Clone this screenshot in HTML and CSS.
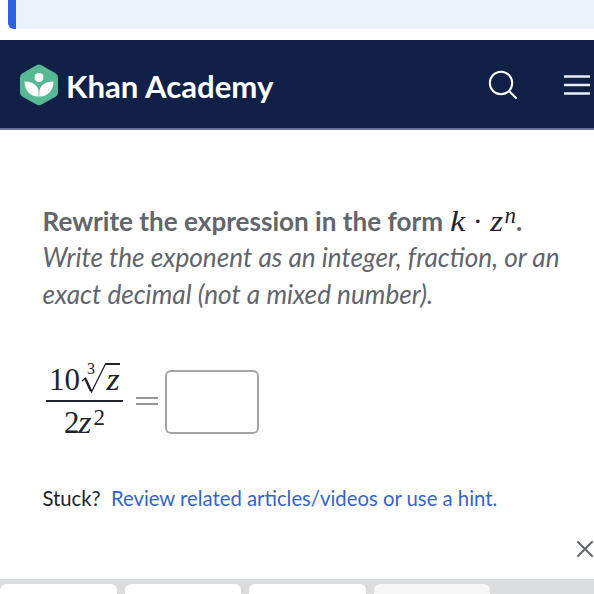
FILE: index.html
```
<!DOCTYPE html>
<html lang="en">
<head>
  <meta charset="UTF-8">
  <meta name="viewport" content="width=device-width, initial-scale=1.0">
  <title>Khan Academy</title>
  <link rel="stylesheet" href="styles.css">
</head>
<body>
<div class="banner"></div>

<header class="header">
  <a class="brand" href="#">
    <svg class="logo" viewBox="0 0 38 42" width="38" height="42">
      <path fill="#57b894" d="M16.5 1.2Q19 -.2 21.5 1.2L35.5 9.2Q38 10.7 38 13.5V28.5Q38 31.3 35.5 32.8L21.5 40.6Q19 42 16.5 40.6L2.5 32.8Q0 31.3 0 28.5V13.5Q0 10.7 2.5 9.2Z"/>
      <circle cx="19" cy="13.5" r="4.5" fill="#fff"/>
      <path fill="#fff" d="M4.500 17.500C12 17.300 18 21 19 28C20 21 26 17.300 33.500 17.500C33.500 26 28 32.500 20 32.500H18C10 32.500 4.500 26 4.500 17.500Z"/>
      <path fill="none" stroke="#57b894" stroke-width=".7" d="M19 24V32"/>
    </svg>
    <span class="brand-name">Khan Academy</span>
  </a>
  <svg class="search" viewBox="0 0 30 30" width="30" height="30">
    <circle cx="13" cy="13" r="11.2"/>
    <path d="M21 21L28 28"/>
  </svg>
  <svg class="menu" viewBox="0 0 26 22" width="26" height="22">
    <path d="M0 2.5H26M0 11H26M0 19.5H26"/>
  </svg>
</header>

<main class="exercise">
  <p class="question"><strong>Rewrite the expression in the form <span class="math"><i class="k">k</i><span class="dot">·</span><i class="var">z</i><sup><i>n</i></sup></span>.</strong></p>
  <p class="question note">Write the exponent as an integer, fraction, or an<br>exact decimal (not a mixed number).</p>

  <div class="equation">
    <div class="fraction">
      <div class="numerator">
        <span>10</span>
        <span class="root">
          <span class="index">3</span>
          <svg class="radical" viewBox="0 0 40 34" width="40" height="34">
            <path class="thin" d="M2 18L5.5 15L11.5 29L25.5 1"/>
            <path class="thick" d="M5.5 16L11 28"/>
            <path class="bar" d="M25.2 1H40"/>
          </svg>
          <i class="radicand">z</i>
        </span>
      </div>
      <div class="denominator">2<i class="var">z</i><sup>2</sup></div>
    </div>
    <svg class="equals" viewBox="0 0 22 10" width="22" height="10">
      <path d="M0 2H22M0 8H22"/>
    </svg>
    <input class="answer" type="text" aria-label="Your answer">
  </div>

  <p class="help">Stuck? <a href="#">Review related articles/videos or use a hint.</a></p>

  <svg class="close" viewBox="0 0 16 16" width="16" height="16">
    <path d="M1 1L15 15M15 1L1 15"/>
  </svg>
</main>

<div class="keypad">
  <span class="key"></span>
  <span class="key"></span>
  <span class="key"></span>
  <span class="key muted"></span>
</div>
</body>
</html>
```
FILE: styles.css
```
* {
  box-sizing: border-box;
}

body {
  margin: 0;
  height: 594px;
  overflow: hidden;
  background: #fff;
  color: #21242c;
  font-family: Lato, sans-serif;
}

p {
  margin: 0;
}

svg {
  display: block;
  flex: none;
}

.banner {
  height: 29px;
  margin: 0 0 11px 8px;
  border-left: 8px solid #2f5fe3;
  border-radius: 0 0 0 6px;
  background: #edf1fb;
}

.header {
  display: flex;
  align-items: center;
  height: 90px;
  padding: 2px 4px 0 20px;
  background: #112047;
  border-bottom: 2px solid #6b7393;
}

.brand {
  display: flex;
  align-items: center;
  color: #fff;
  text-decoration: none;
}

.brand-name {
  margin: 2px 0 0 8px;
  font-size: 31.2px;
  font-weight: bold;
  line-height: 40px;
  white-space: nowrap;
}

.search {
  margin-left: auto;
  fill: none;
  stroke: #fff;
  stroke-width: 2;
  stroke-linecap: round;
}

.menu {
  margin-left: 46px;
  fill: none;
  stroke: #e8eefa;
  stroke-width: 2.5;
}

.exercise {
  height: 449px;
  padding: 73px 0 0 42.5px;
}

.question {
  height: 36px;
  color: #626569;
  font-size: 26.1px;
  line-height: 37px;
  white-space: nowrap;
}
.question.note {
  height: 73px;
  font-size: 26.2px;
  font-style: italic;
  line-height: 36.5px;
}

.math,
.equation {
  color: #21242c;
  font-family: "Liberation Serif", serif;
  font-weight: normal;
}
.math {
  margin-left: 1px;
  font-size: 30px;
  line-height: 0;
}
.math sup {
  font-size: 23px;
  line-height: 0;
  vertical-align: 8px;
}
.math .k {
  display: inline-block;
  transform: scaleX(1.15);
  transform-origin: left;
}
.math .dot {
  margin: 0 8px 0 9px;
}

.var {
  display: inline-block;
  padding-right: 2px;
  transform: scaleX(1.1);
}

.equation {
  display: flex;
  width: 216px;
  height: 82px;
  margin: 47px 0 0 3.5px;
  font-size: 31px;
}

.fraction {
  width: 77px;
  text-align: center;
}

.numerator {
  display: flex;
  height: 43px;
  padding-left: 3px;
  border-bottom: 2px solid #21242c;
  line-height: 42px;
}

.root {
  position: relative;
  width: 40px;
  height: 34px;
  margin-top: 4px;
  flex: none;
}
.root .index {
  position: absolute;
  left: 7px;
  top: -2px;
  font-size: 16px;
  line-height: 16px;
}
.root .radicand {
  position: absolute;
  right: 1px;
  top: -4px;
  transform: scaleX(1.1);
}
.radical {
  position: absolute;
  left: 0;
  top: 0;
  fill: none;
  stroke: #21242c;
}
.radical .thin {
  stroke-width: 1.3;
}
.radical .thick {
  stroke-width: 2.5;
}
.radical .bar {
  stroke-width: 2;
}

.denominator {
  line-height: 42px;
}
.denominator sup {
  font-size: 23px;
  line-height: 0;
  vertical-align: 8px;
}

.equals {
  margin: 37px 7px 0 13px;
  fill: none;
  stroke: #74767b;
  stroke-width: 1.5;
}

.answer {
  width: 94px;
  height: 64px;
  margin: 11px 0 0;
  border: 2px solid #a2a4a6;
  border-radius: 6px;
  background: #fff;
  flex: none;
}

.help {
  margin-top: 42px;
  font-size: 20.3px;
  line-height: 30px;
  white-space: nowrap;
}
.help a {
  margin-left: 5px;
  color: #3465c8;
  text-decoration: none;
}

.close {
  margin: 28px 1px 0 auto;
  fill: none;
  stroke: #626569;
  stroke-width: 2;
  stroke-linecap: round;
}

.keypad {
  display: flex;
  gap: 8px;
  height: 15px;
  padding-top: 5px;
  background: #dbdcdd;
}

.key {
  width: 116.5px;
  border-radius: 6px 6px 0 0;
  background: #fff;
}
.key.muted {
  background: #f6f6f7;
}
```
